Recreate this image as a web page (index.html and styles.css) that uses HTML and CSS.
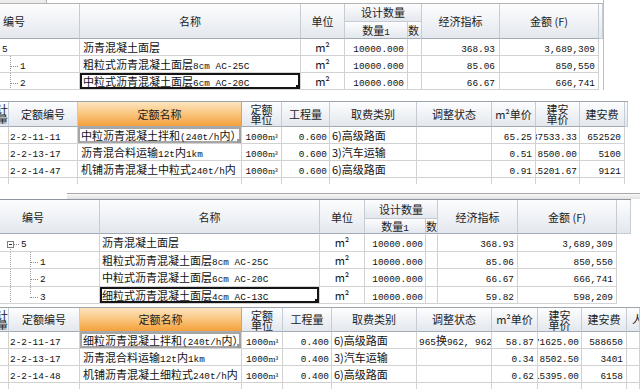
FILE: index.html
```html
<!DOCTYPE html>
<html lang="zh-CN">
<head>
<meta charset="utf-8">
<title>定额计算</title>
<link rel="stylesheet" href="styles.css">
</head>
<body>
<main class="page">

<section class="p1">
  <div class="topstrip"><span class="ts-left"></span></div>
  <table class="grid g1">
    <colgroup><col><col><col><col><col><col><col><col></colgroup>
    <thead>
      <tr class="ha">
        <th rowspan="2" class="lefth1">编号</th>
        <th rowspan="2">名称</th>
        <th rowspan="2">单位</th>
        <th colspan="2" class="grp">设计数量</th>
        <th rowspan="2">经济指标</th>
        <th rowspan="2">金额 (F)</th>
        <th rowspan="2" class="thfill"></th>
      </tr>
      <tr class="hb">
        <th>数量<span class="m">1</span></th>
        <th class="sub-l">数</th>
      </tr>
    </thead>
    <tbody>
      <tr>
        <td class="code1"><span class="m">5</span></td>
        <td class="name">沥青混凝土面层</td>
        <td class="unit">m²</td>
        <td class="num"><span class="m">10000.000</span></td>
        <td></td>
        <td class="num n4"><span class="m">368.93</span></td>
        <td class="num"><span class="m">3,689,309</span></td>
        <td class="fill"></td>
      </tr>
      <tr>
        <td class="code1 kid1"><span class="hl"></span><span class="m">1</span></td>
        <td class="name">粗粒式沥青混凝土面层<span class="m">8cm AC-25C</span></td>
        <td class="unit">m²</td>
        <td class="num"><span class="m">10000.000</span></td>
        <td></td>
        <td class="num n4"><span class="m">85.06</span></td>
        <td class="num"><span class="m">850,550</span></td>
        <td class="fill"></td>
      </tr>
      <tr>
        <td class="code1 kid1"><span class="hl"></span><span class="m">2</span></td>
        <td class="name sel">中粒式沥青混凝土面层<span class="m">6cm AC-20C</span></td>
        <td class="unit">m²</td>
        <td class="num"><span class="m">10000.000</span></td>
        <td></td>
        <td class="num n4"><span class="m">66.67</span></td>
        <td class="num"><span class="m">666,741</span></td>
        <td class="fill"></td>
      </tr>
    </tbody>
  </table>
</section>

<section class="p2">
  <table class="grid g2">
    <colgroup><col><col><col><col><col><col><col><col><col><col><col></colgroup>
    <thead>
      <tr>
        <th><div class="cut"><span>计</span><span>量</span></div></th>
        <th>定额编号</th>
        <th class="orange">定额名称</th>
        <th><div class="two">定额<br>单位</div></th>
        <th>工程量</th>
        <th>取费类别</th>
        <th>调整状态</th>
        <th>m²单价</th>
        <th><div class="two">建安<br>单价</div></th>
        <th>建安费</th>
        <th class="thfill"></th>
      </tr>
    </thead>
    <tbody>
      <tr>
        <td></td>
        <td class="qcode"><span class="m">2-2-11-11</span></td>
        <td class="qname sel2">中粒沥青混凝土拌和<span class="m">(240t/h</span>内）</td>
        <td class="unit"><span class="m">1000</span><span class="u">m³</span></td>
        <td class="num n2"><span class="m">0.600</span></td>
        <td class="fee">6)高级路面</td>
        <td></td>
        <td class="num"><span class="m">65.25</span></td>
        <td class="n2"><div class="cl"><span class="w"><span class="m">37533.33</span></span></div></td>
        <td class="num"><span class="m">652520</span></td>
        <td class="fill"></td>
      </tr>
      <tr>
        <td></td>
        <td class="qcode"><span class="m">2-2-13-17</span></td>
        <td class="qname">沥青混合料运输<span class="m">12t</span>内<span class="m">1km</span></td>
        <td class="unit"><span class="m">1000</span><span class="u">m³</span></td>
        <td class="num n2"><span class="m">0.600</span></td>
        <td class="fee">3)汽车运输</td>
        <td></td>
        <td class="num"><span class="m">0.51</span></td>
        <td class="n2"><div class="cl"><span class="w"><span class="m">8500.00</span></span></div></td>
        <td class="num"><span class="m">5100</span></td>
        <td class="fill"></td>
      </tr>
      <tr>
        <td></td>
        <td class="qcode"><span class="m">2-2-14-47</span></td>
        <td class="qname">机铺沥青混凝土中粒式<span class="m">240t/h</span>内</td>
        <td class="unit"><span class="m">1000</span><span class="u">m³</span></td>
        <td class="num n2"><span class="m">0.600</span></td>
        <td class="fee">6)高级路面</td>
        <td></td>
        <td class="num"><span class="m">0.91</span></td>
        <td class="n2"><div class="cl"><span class="w"><span class="m">15201.67</span></span></div></td>
        <td class="num"><span class="m">9121</span></td>
        <td class="fill"></td>
      </tr>
      <tr class="partial">
        <td></td><td></td><td></td><td></td><td></td><td></td><td></td><td></td><td></td><td></td><td class="fill"></td>
      </tr>
    </tbody>
  </table>
</section>

<div class="hscroll"></div>

<section class="p3">
  <table class="grid g3">
    <colgroup><col><col><col><col><col><col><col><col></colgroup>
    <thead>
      <tr class="ha">
        <th rowspan="2" class="lefth3">编号</th>
        <th rowspan="2">名称</th>
        <th rowspan="2">单位</th>
        <th colspan="2" class="grp">设计数量</th>
        <th rowspan="2">经济指标</th>
        <th rowspan="2">金额 (F)</th>
        <th rowspan="2" class="thfill"></th>
      </tr>
      <tr class="hb">
        <th>数量<span class="m">1</span></th>
        <th class="sub-l">数</th>
      </tr>
    </thead>
    <tbody>
      <tr class="tall">
        <td class="code3 root"><span class="box"></span><span class="hl short"></span><span class="m">5</span></td>
        <td class="name3">沥青混凝土面层</td>
        <td class="unit">m²</td>
        <td class="num n2"><span class="m">10000.000</span></td>
        <td></td>
        <td class="num"><span class="m">368.93</span></td>
        <td class="num"><span class="m">3,689,309</span></td>
        <td class="fill"></td>
      </tr>
      <tr>
        <td class="code3 kid3"><span class="hl"></span><span class="m">1</span></td>
        <td class="name3">粗粒式沥青混凝土面层<span class="m">8cm AC-25C</span></td>
        <td class="unit">m²</td>
        <td class="num n2"><span class="m">10000.000</span></td>
        <td></td>
        <td class="num"><span class="m">85.06</span></td>
        <td class="num"><span class="m">850,550</span></td>
        <td class="fill"></td>
      </tr>
      <tr class="tall">
        <td class="code3 kid3"><span class="hl"></span><span class="m">2</span></td>
        <td class="name3">中粒式沥青混凝土面层<span class="m">6cm AC-20C</span></td>
        <td class="unit">m²</td>
        <td class="num n2"><span class="m">10000.000</span></td>
        <td></td>
        <td class="num"><span class="m">66.67</span></td>
        <td class="num"><span class="m">666,741</span></td>
        <td class="fill"></td>
      </tr>
      <tr>
        <td class="code3 kid3 last"><span class="hl"></span><span class="m">3</span></td>
        <td class="name3 sel">细粒式沥青混凝土面层<span class="m">4cm AC-13C</span></td>
        <td class="unit">m²</td>
        <td class="num n2"><span class="m">10000.000</span></td>
        <td></td>
        <td class="num"><span class="m">59.82</span></td>
        <td class="num"><span class="m">598,209</span></td>
        <td class="fill"></td>
      </tr>
    </tbody>
  </table>
</section>

<section class="p4">
  <table class="grid g4">
    <colgroup><col><col><col><col><col><col><col><col><col><col><col></colgroup>
    <thead>
      <tr>
        <th><div class="cut"><span>计</span><span>量</span></div></th>
        <th>定额编号</th>
        <th class="orange">定额名称</th>
        <th><div class="two">定额<br>单位</div></th>
        <th>工程量</th>
        <th>取费类别</th>
        <th>调整状态</th>
        <th>m²单价</th>
        <th><div class="two">建安<br>单价</div></th>
        <th>建安费</th>
        <th class="lastcol">人工费</th>
      </tr>
    </thead>
    <tbody>
      <tr>
        <td></td>
        <td class="qcode"><span class="m">2-2-11-17</span></td>
        <td class="qname sel2">细粒沥青混凝土拌和<span class="m">(240t/h</span>内）</td>
        <td class="unit"><span class="m">1000</span><span class="u">m³</span></td>
        <td class="num n2"><span class="m">0.400</span></td>
        <td class="fee">6)高级路面</td>
        <td class="fee"><span class="m">965</span>换<span class="m">962, 962;</span></td>
        <td class="num"><span class="m">58.87</span></td>
        <td class="n2"><div class="cl"><span class="w"><span class="m">71625.00</span></span></div></td>
        <td class="num"><span class="m">588650</span></td>
        <td></td>
      </tr>
      <tr>
        <td></td>
        <td class="qcode"><span class="m">2-2-13-17</span></td>
        <td class="qname">沥青混合料运输<span class="m">12t</span>内<span class="m">1km</span></td>
        <td class="unit"><span class="m">1000</span><span class="u">m³</span></td>
        <td class="num n2"><span class="m">0.400</span></td>
        <td class="fee">3)汽车运输</td>
        <td></td>
        <td class="num"><span class="m">0.34</span></td>
        <td class="n2"><div class="cl"><span class="w"><span class="m">8502.50</span></span></div></td>
        <td class="num"><span class="m">3401</span></td>
        <td></td>
      </tr>
      <tr>
        <td></td>
        <td class="qcode"><span class="m">2-2-14-48</span></td>
        <td class="qname">机铺沥青混凝土细粒式<span class="m">240t/h</span>内</td>
        <td class="unit"><span class="m">1000</span><span class="u">m³</span></td>
        <td class="num n2"><span class="m">0.400</span></td>
        <td class="fee">6)高级路面</td>
        <td></td>
        <td class="num"><span class="m">0.62</span></td>
        <td class="n2"><div class="cl"><span class="w"><span class="m">15395.00</span></span></div></td>
        <td class="num"><span class="m">6158</span></td>
        <td></td>
      </tr>
      <tr>
        <td></td><td></td><td></td><td></td><td></td><td></td><td></td><td></td><td></td><td></td><td></td>
      </tr>
    </tbody>
  </table>
</section>

</main>
</body>
</html>
```

FILE: styles.css
```css
* { box-sizing: border-box; }
html, body { margin: 0; padding: 0; background: #fff; }
body {
  width: 640px;
  height: 389px;
  overflow: hidden;
  font-family: "Noto Sans CJK SC", "Liberation Sans", sans-serif;
  font-size: 11px;
  color: #111;
}
.page { width: 640px; }

.m {
  font-family: "Liberation Mono", "DejaVu Sans Mono", monospace;
  font-size: 9.4px;
  line-height: 1;
  vertical-align: baseline;
}
.u {
  font-family: "Liberation Serif", serif;
  font-size: 10px;
  line-height: 1;
}

/* generic grid */
.grid { border-collapse: separate; border-spacing: 0; table-layout: fixed; }
.grid th, .grid td { padding: 0; white-space: nowrap; overflow: hidden; }
.grid th {
  font-weight: normal;
  color: #1c1c1c;
  text-align: center;
  vertical-align: middle;
  background: linear-gradient(#fdfdfe, #e3e8ee);
  border-right: 1px solid #c6ccd4;
  border-bottom: 1px solid #a3abb6;
}
.grid td {
  height: 17px;
  line-height: 16px;
  border-right: 1px solid #d2d2d2;
  border-bottom: 1px solid #d2d2d2;
}
.grid tr.tall td { height: 18px; line-height: 17px; }
.grid td.fill { border: 0; }
.grid th.thfill { border-bottom-color: #c6ccd4; }
.grid .grp { border-bottom-color: #c6ccd4; }
.grid .sub-l { text-align: left; }

.num { text-align: right; padding-right: 3px !important; }
.num.n2, .n2 { padding-right: 2px !important; }
.num.n4 { padding-right: 4px !important; }
.unit { text-align: center; }
.unit .u { font-size: 11px; }
td.unit .m + .u { font-size: 9px; }

/* panel 1 */
.p1 { width: 604px; border-right: 1px solid #b9bec6; }
.topstrip { height: 4px; border-bottom: 1px solid #b3b3b3; display: flex; }
.ts-left { width: 47px; background: #ececec; border-right: 1px solid #b3b3b3; }
.g1 { width: 603px; }
.g1 col:nth-child(1) { width: 80px; }
.g1 col:nth-child(2) { width: 221px; }
.g1 col:nth-child(3) { width: 44px; }
.g1 col:nth-child(4) { width: 63px; }
.g1 col:nth-child(5) { width: 14px; }
.g1 col:nth-child(6) { width: 78px; }
.g1 col:nth-child(7) { width: 99px; }
.g1 col:nth-child(8) { width: 4px; }
.g1 .ha th { height: 18px; line-height: 17px; }
.g1 .hb th { height: 17px; line-height: 16px; }
.lefth1 { text-align: left !important; padding-left: 3px !important; }
.code1 { padding-left: 2px !important; }
.name { padding-left: 3px !important; }

/* tree lines */
.hl {
  display: inline-block;
  width: 8px;
  height: 0;
  border-top: 1px dotted #8c8c8c;
  vertical-align: middle;
  margin-right: 2px;
}
.hl.short { width: 5px; }
.kid1 {
  padding-left: 10px !important;
  background: repeating-linear-gradient(to bottom, #9c9c9c 0 1px, transparent 1px 2px) 10px 0 / 1px 100% no-repeat;
}
.box {
  display: inline-block;
  width: 7px;
  height: 7px;
  border: 1px solid #7d7d7d;
  vertical-align: middle;
  background: linear-gradient(#333, #333) center / 3px 1px no-repeat, #fff;
}
.code3.root {
  padding-left: 7px !important;
  background: repeating-linear-gradient(to bottom, #a8a8a8 0 1px, transparent 1px 2px) 10px 100% / 1px 40% no-repeat;
}
.kid3 {
  padding-left: 30px !important;
  background:
    repeating-linear-gradient(to bottom, #a8a8a8 0 1px, transparent 1px 2px) 10px 0 / 1px 100% no-repeat,
    repeating-linear-gradient(to bottom, #9c9c9c 0 1px, transparent 1px 2px) 30px 0 / 1px 100% no-repeat;
}
.kid3.last {
  background:
    repeating-linear-gradient(to bottom, #a8a8a8 0 1px, transparent 1px 2px) 10px 0 / 1px 100% no-repeat,
    repeating-linear-gradient(to bottom, #9c9c9c 0 1px, transparent 1px 2px) 30px 0 / 1px 50% no-repeat;
}

/* selection frames */
.sel, .sel2 { position: relative; }
.sel { box-shadow: inset 0 0 0 2px #151515; }
.sel::after {
  content: "";
  position: absolute;
  right: 0;
  bottom: 0;
  width: 4px;
  height: 4px;
  background: #151515;
}
.sel2 { box-shadow: inset 0 0 0 2px #a6a6a6; }
.sel2::after {
  content: "";
  position: absolute;
  right: 0;
  bottom: 0;
  width: 4px;
  height: 4px;
  background: #9a9a9a;
}

/* panel 2 & 4 (quota grids) */
.p2 { margin-top: 11px; width: 628px; border-top: 1px solid #9ea4ac; }
.g2 { width: 628px; }
.g2 col:nth-child(1) { width: 9px; }
.g2 col:nth-child(2) { width: 69px; }
.g2 col:nth-child(3) { width: 164px; }
.g2 col:nth-child(4) { width: 40px; }
.g2 col:nth-child(5) { width: 48px; }
.g2 col:nth-child(6) { width: 87px; }
.g2 col:nth-child(7) { width: 75px; }
.g2 col:nth-child(8) { width: 44px; }
.g2 col:nth-child(9) { width: 44px; }
.g2 col:nth-child(10) { width: 45px; }
.g2 col:nth-child(11) { width: 3px; }
.g2 th, .g4 th { height: 25px; line-height: 24px; }
.g2 tr.partial td { height: 6px; line-height: 6px; border-bottom: 0; }
.g2 tr.partial td.fill { border: 0; }

.orange {
  background: linear-gradient(#fde5bf, #f9c176 55%, #f4a03b) !important;
  border-right-color: #d9a25a !important;
}
.two { line-height: 10px; }
.cut {
  display: flex;
  flex-direction: column;
  align-items: flex-end;
  overflow: hidden;
  line-height: 10px;
}
.cut span { flex-shrink: 0; }
.cl {
  display: flex;
  justify-content: flex-end;
  overflow: hidden;
}
.cl .w { flex-shrink: 0; line-height: 16px; }
.qcode { padding-left: 1px !important; }
.qname { padding-left: 3px !important; }
.fee { padding-left: 2px !important; }

.hscroll {
  margin-top: 9px;
  margin-left: 67px;
  height: 6px;
  border-top: 1px solid #aaaaaa;
  background: linear-gradient(#f8f8f8, #e2e2e2);
}

/* panel 3 */
.p3 { width: 631px; border-top: 1px solid #8f959d; }
.g3 { width: 631px; }
.g3 col:nth-child(1) { width: 100px; }
.g3 col:nth-child(2) { width: 220px; }
.g3 col:nth-child(3) { width: 45px; }
.g3 col:nth-child(4) { width: 61px; }
.g3 col:nth-child(5) { width: 12px; }
.g3 col:nth-child(6) { width: 80px; }
.g3 col:nth-child(7) { width: 99px; }
.g3 col:nth-child(8) { width: 14px; }
.g3 .ha th { height: 19px; line-height: 18px; }
.g3 .hb th { height: 15px; line-height: 14px; }
.lefth3 { text-align: left !important; padding-left: 22px !important; }
.name3 { padding-left: 2px !important; }

/* panel 4 */
.p4 { margin-top: 3px; width: 640px; border-top: 1px solid #9ea4ac; }
.g4 { width: 640px; }
.g4 col:nth-child(1) { width: 9px; }
.g4 col:nth-child(2) { width: 71px; }
.g4 col:nth-child(3) { width: 162px; }
.g4 col:nth-child(4) { width: 41px; }
.g4 col:nth-child(5) { width: 49px; }
.g4 col:nth-child(6) { width: 85px; }
.g4 col:nth-child(7) { width: 75px; }
.g4 col:nth-child(8) { width: 46px; }
.g4 col:nth-child(9) { width: 44px; }
.g4 col:nth-child(10) { width: 45px; }
.g4 col:nth-child(11) { width: 13px; }
.g4 th { height: 24px; line-height: 23px; }
.lastcol { text-align: left !important; padding-left: 5px !important; }
```
